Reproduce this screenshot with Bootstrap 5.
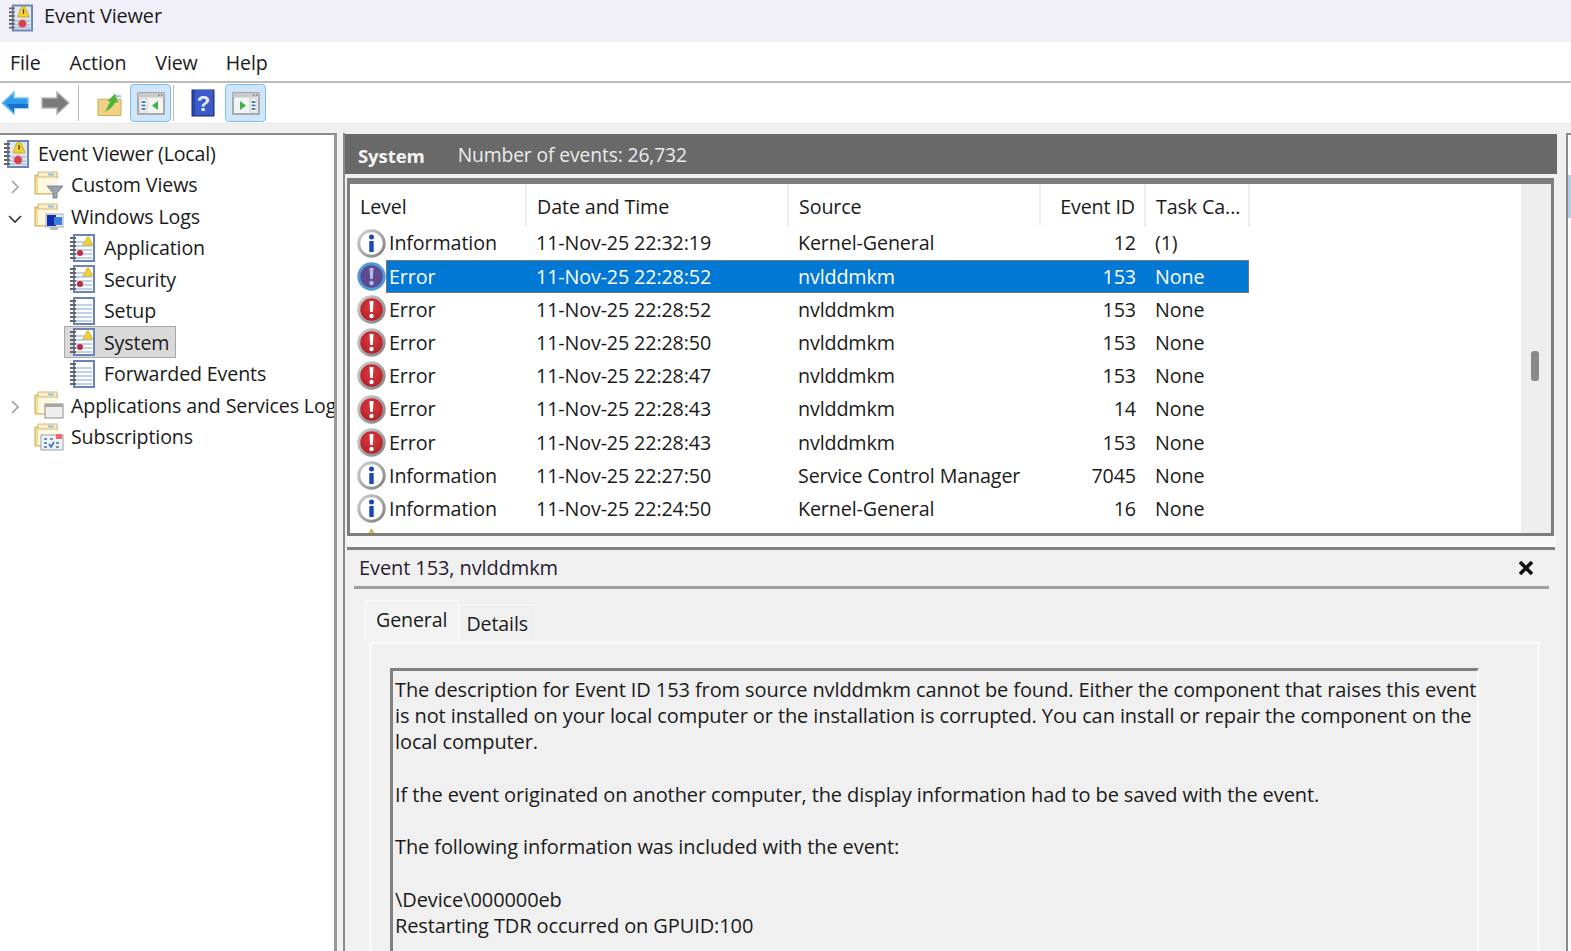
<!DOCTYPE html>
<html lang="en"><head><meta charset="utf-8"><title>Event Viewer</title>
<link href="https://cdn.jsdelivr.net/npm/bootstrap@5.3.0/dist/css/bootstrap.min.css" rel="stylesheet">
<style>
:root{--ff:"Open Sans","Noto Sans",sans-serif}
html,body{height:951px;overflow:hidden}
body{font-family:var(--ff);font-size:19.6px;color:#1a1a1a;background:#f0f0f0;letter-spacing:-.12px}
.ev-title{height:42px;background:#f1f0f8;padding:0 0 10px 8px;gap:11px}
.ev-title svg{width:25px;height:28px;flex:none;margin-top:3px}
.ev-title span{font-size:19.9px}
.ev-menu{height:41px;background:#fff;border-bottom:2px solid #bdbdbd;padding-top:3px}
.m1{margin-left:10px}.m2{margin-left:29px}.m3{margin-left:29px}.m4{margin-left:28px}
.ev-tools{height:41px;background:#fff;border-bottom:1px solid #e8e8e8;position:relative}
.tb-sep{width:1px;height:36px;background:#bbb}
.tb-on{width:41px;height:38px;background:#cfe6fa;border:1px solid #7fbcec;border-radius:4px}
.ev-main{height:calc(951px - 124px);padding-top:9px;background:#f0f0f0}
.ev-tree{width:337px;flex:none;background:#fff;border-top:2px solid #8a8a8a;border-right:3px solid #999;overflow:hidden;padding-top:3px;white-space:nowrap}
.ev-tree svg{flex:none}
.t-row{height:31.45px}
.t-chev{width:30px;flex:none;text-align:center}
.t-l0{padding-left:3px}.t-l0 svg{width:26px;height:28px;margin-right:9px}
.t-l0 span{letter-spacing:-.2px}
.t-l1 svg.fi{width:30px;height:28px;margin-right:7px;margin-left:4px}
.t-l2{padding-left:69px}.t-l2 svg{width:26px;height:28px;margin-right:9px}
.t-clip{overflow:hidden;width:263px;flex:none}
.t-sel{background:#d9d9d9;border:1px solid #a8a8a8;margin-left:-5px;padding:0 6px 0 4px;height:32px;width:112px}
.ev-center{width:1214px;margin-left:6px;flex:none;border-left:2px solid #8a8a8a}
.ev-head{height:40px;background:#696969;color:#ececec;margin-top:1px;padding:3px 0 0 13px;gap:33px;font-size:19.3px}
.ev-head b{font-weight:700;color:#f5f5f5;font-size:18.6px}
.ev-list{height:358px;margin:4px 3px 0 2px;background:#fff;border:3px solid #7d7d7d;border-top-width:6px;overflow:hidden;position:relative}
.ev-scroll{position:absolute;right:0;top:0;bottom:0;width:30px;background:#eee}
.ev-thumb{position:absolute;left:10px;top:167px;width:8px;height:30px;background:#8a8a8a;border-radius:3px}
.ev-tbl{table-layout:fixed;width:899px;margin:0;border-collapse:collapse;font-size:19.7px}
.ev-tbl td,.ev-tbl th{padding:0 9px 0 10px;font-weight:400;height:33.2px;white-space:nowrap;overflow:hidden;border:0;background:transparent;color:#1a1a1a;vertical-align:middle}
.ev-tbl thead th{height:42.6px;border-right:2px solid #eee;padding-top:2px}
.ev-tbl td.c-ico{padding:0 0 0 7px;line-height:0}
.ev-tbl td.c-lvl{padding-left:3px}
.ev-tbl svg{width:29px;height:29px}
.ev-tbl .num{text-align:right}
.ev-tbl tr.on td:not(.c-ico){background:#0078d4;color:#fff;box-shadow:inset 0 1px #777,inset 0 -1px #777}
.ev-tbl tr.on td.c-lvl{box-shadow:inset 0 1px #777,inset 0 -1px #777,inset 1px 0 #777}
.ev-tbl tr.on td:last-child{box-shadow:inset 0 1px #777,inset 0 -1px #777,inset -1px 0 #777}
.ev-gap{height:11px;background:#f7f7f7;margin:0 1px 0 2px}
.ev-detail{background:#f0f0f0;margin-left:2px;margin-right:2px;border-top:3px solid #808080;height:405px;padding:0 6px 0 7px;font-size:20px;letter-spacing:-.1px}
.d-title{height:39px;border-bottom:3px solid #a0a0a0;padding:0 0 0 5px;color:#2a1a30}
.d-close{width:18px;height:18px;margin-right:14px}
.d-tabs{margin:11px 0 0 10px;border:0;align-items:flex-end}
.d-tabs .nav-link{border:1px solid #f7f7f7;border-bottom:0;border-radius:0;color:#1a1a1a;background:#f0f0f0;padding:0 6px;height:37px;line-height:37px;margin:0;font-size:19.6px}
.d-tabs .nav-link.active{height:41px;background:#f3f3f3;padding:0 11px;border-color:#f9f9f9;line-height:38px;color:#1a1a1a}
.d-body{margin:0 9px 0 15px;border:3px solid #f8f8f8;border-bottom:0;height:320px;padding:24px 55px 0 18px}
.d-text{border-left:3px solid #808080;border-top:3px solid #808080;border-right:2px solid #fafafa;padding:6px 0 0 2px;line-height:26.2px;height:300px;white-space:nowrap;overflow:hidden;width:1089px}
.ev-right{flex:1;margin-left:9px;border-left:2px solid #8a8a8a;border-top:2px solid #8a8a8a;background:#fff}
.ev-right div{height:43px;margin-top:40px;background:#b5cde8}
.hq{font:700 22px "Liberation Sans",sans-serif;fill:#e8ecf8}
</style></head><body>
<svg width="0" height="0" class="position-absolute">
<defs>
<radialGradient id="g-red" cx=".5" cy=".4" r=".65"><stop offset="0" stop-color="#e03a3f"/><stop offset="1" stop-color="#a81c26"/></radialGradient>
<linearGradient id="g-ring" x1="0" y1="0" x2="1" y2="1"><stop offset="0" stop-color="#d0d0d0"/><stop offset="1" stop-color="#808080"/></linearGradient>
<symbol id="i-log" viewBox="0 0 26 28"><rect x="5" y="1" width="20" height="26" fill="#fff" stroke="#6a83b8" stroke-width="2"/><path d="M7 8h16M7 12h16M7 16h16M7 20h16M7 24h16" stroke="#a9c3e2" stroke-width="1.6"/><path d="M1 4h6M1 8h6M1 12h6M1 16h6M1 20h6M1 24h6" stroke="#666" stroke-width="2"/></symbol>
<symbol id="i-logw" viewBox="0 0 26 28"><use href="#i-log"/><path d="M13 11l3-3 2-5h2l2 5 2 3z" fill="#f3d22f" stroke="#c9a814" stroke-width=".6"/><circle cx="11" cy="19" r="3" fill="#c8273a"/></symbol>
<symbol id="i-logb" viewBox="0 0 26 28"><rect x="5" y="1" width="20" height="26" fill="#dfe7f3" stroke="#6a83b8" stroke-width="2"/><path d="M7 17h16M7 21h16M7 24h16" stroke="#a9c3e2" stroke-width="1.6"/><path d="M1 4h6M1 8h6M1 12h6M1 16h6M1 20h6M1 24h6" stroke="#666" stroke-width="2"/><path d="M16 2c-3 0-4 6-5 8l-1 3h12l-1-3c-1-2-2-8-5-8z" fill="#f3d22f" stroke="#b89a14" stroke-width=".7"/><path d="M15.500 5h1.300v4.500h-1.300z" fill="#333"/><circle cx="15" cy="20" r="4.500" fill="#d2434f" stroke="#f3b9bd"/></symbol>
<symbol id="i-fold" viewBox="0 0 30 28"><path d="M1 4h6l1-2h15v6h-1v15H1z" fill="#f5dc93" stroke="#c9ab5f"/><rect x="4" y="5" width="19" height="17" fill="#fff8e0"/><rect x="4" y="1" width="19" height="5" fill="#f9eec7" stroke="#c9ab5f" stroke-width=".8"/><rect x="14" y="2.500" width="6" height="2" fill="#8fbfe6"/></symbol>
<symbol id="i-ffil" viewBox="0 0 30 28"><use href="#i-fold"/><path d="M13 15h16l-6 7v5h-4v-5z" fill="#9aa3ad" stroke="#6f7a85" stroke-width=".8"/></symbol>
<symbol id="i-fwin" viewBox="0 0 30 28"><use href="#i-fold"/><rect x="12" y="11" width="17" height="13" fill="#e9eef5" stroke="#a4adb9"/><path d="M13 12h9v11h-9z" fill="#0f2fb0"/><path d="M20 14h8v8h-8z" fill="#3c7fe0"/><path d="M16 24h8v3h-8z" fill="#bbb"/></symbol>
<symbol id="i-fapp" viewBox="0 0 30 28"><use href="#i-fold"/><rect x="11" y="13" width="18" height="14" fill="#eee" stroke="#8d8d8d"/><rect x="11" y="13" width="18" height="3" fill="#a5a5a5"/></symbol>
<symbol id="i-fsub" viewBox="0 0 30 28"><use href="#i-fold"/><rect x="7" y="12" width="22" height="15" fill="#eef1f5" stroke="#9aa3ad"/><rect x="22" y="11" width="6" height="5" fill="#f0686e"/><path d="M10 16h3M16 16h3M10 20h3M22 20h3M22 24h3M10 24h3" stroke="#4a6fb0" stroke-width="1.500"/><path d="M15 21l2 3 3-5" stroke="#2f6fd0" stroke-width="1.500" fill="none"/></symbol>
<symbol id="i-info" viewBox="0 0 29 29"><circle cx="14.500" cy="14.500" r="12.700" fill="#fff" stroke="url(#g-ring)" stroke-width="3"/><rect x="12.300" y="12" width="4.400" height="11" fill="#1a46b8"/><circle cx="14.500" cy="8" r="2.500" fill="#1a46b8"/></symbol>
<symbol id="i-err" viewBox="0 0 29 29"><circle cx="14.500" cy="14.500" r="12.700" fill="url(#g-red)" stroke="url(#g-ring)" stroke-width="3"/><path d="M12.500 6h4l-.7 11h-2.600z" fill="#fff"/><circle cx="14.500" cy="21" r="2.200" fill="#fff"/></symbol>
<symbol id="i-errs" viewBox="0 0 29 29"><circle cx="14.500" cy="14.500" r="12.700" fill="#5f4a92" stroke="#4f9bd8" stroke-width="3"/><path d="M12.500 6h4l-.7 11h-2.600z" fill="#aebfe0"/><circle cx="14.500" cy="21" r="2.200" fill="#aebfe0"/></symbol>
<symbol id="i-warn" viewBox="0 0 29 29"><path d="M14.500 2L27 26H2z" fill="#f3d22f" stroke="#b89a14"/></symbol>
<symbol id="i-pane" viewBox="0 0 28 24"><rect x="1" y="2" width="26" height="21" fill="#f4f4f4" stroke="#8d8d8d" stroke-width="1.400"/><rect x="1" y="2" width="26" height="4.500" fill="#c9c9c9"/><path d="M21 4h1.500M24 4h1.500" stroke="#555"/><rect x="3" y="8" width="7" height="13" fill="#fff" stroke="#b9b9b9" stroke-width=".7"/><path d="M4.500 11h4M4.500 14.500h4M4.500 18h4" stroke="#4f7fc0" stroke-width="2"/></symbol>
<symbol id="i-panr" viewBox="0 0 28 24"><rect x="1" y="2" width="26" height="21" fill="#f4f4f4" stroke="#8d8d8d" stroke-width="1.400"/><rect x="1" y="2" width="26" height="4.500" fill="#c9c9c9"/><path d="M21 4h1.500M24 4h1.500" stroke="#555"/><rect x="18" y="8" width="7" height="13" fill="#fff" stroke="#b9b9b9" stroke-width=".7"/><path d="M19.500 11h4M19.500 14.500h4M19.500 18h4" stroke="#4f7fc0" stroke-width="2"/></symbol>
</defs></svg>

<div class="ev-title d-flex align-items-center"><svg><use href="#i-logb"/></svg><span>Event Viewer</span></div>
<div class="ev-menu d-flex align-items-center"><span class="m1">File</span><span class="m2">Action</span><span class="m3">View</span><span class="m4">Help</span></div>
<div class="ev-tools d-flex align-items-center">
 <svg class="tb-a" style="margin-left:1px" width="28" height="24" viewBox="0 0 28 24"><path d="M1 12L13 1v6h14v10H13v6z" fill="#2f9be8" stroke="#7cc3f2" stroke-width="1.500"/><path d="M6 13h21v4H13v5z" fill="#1772c9"/></svg>
 <svg style="margin-left:12px" width="29" height="24" viewBox="0 0 29 24"><path d="M28 12L16 1v6H1v10h15v6z" fill="#7a7a7a" stroke="#b5b5b5" stroke-width="1.500"/></svg>
 <div class="tb-sep ms-2"></div>
 <svg style="margin-left:18px" width="25" height="27" viewBox="0 0 26 27"><path d="M1 9h24v17H1z" fill="#f0d184" stroke="#c9ab5f"/><path d="M8 22c3-3 3-7 6-10l-3-1 8-8 3 10-3-1c-2 4-5 8-11 10z" fill="#4cb43a"/><rect x="19" y="5" width="6" height="2" fill="#8fbfe6"/></svg>
 <div class="tb-on d-flex align-items-center justify-content-center" style="margin-left:8px"><svg width="28" height="24"><use href="#i-pane"/><path d="M21 10v9l-6-4.500z" fill="#38b44a"/></svg></div>
 <div class="tb-sep" style="margin-left:2px"></div>
 <svg style="margin-left:17px;flex:none" width="24" height="29" viewBox="0 0 24 29"><rect x="1" y="1" width="22" height="26" fill="#2b46a8" stroke="#1d2f7a"/><path d="M4 1h18v25H4z" fill="#3a5bc8"/><text class="hq" x="12.500" y="22" text-anchor="middle">?</text></svg>
 <div class="tb-on d-flex align-items-center justify-content-center" style="margin-left:10px"><svg width="28" height="24"><use href="#i-panr"/><path d="M8 10v9l6-4.500z" fill="#38b44a"/></svg></div>
</div>

<div class="ev-main d-flex">
 <div class="ev-tree">
  <div class="t-row t-l0 d-flex align-items-center"><svg><use href="#i-logb"/></svg><span>Event Viewer (Local)</span></div>
  <div class="t-row t-l1 d-flex align-items-center"><span class="t-chev"><svg width="10" height="16" viewBox="0 0 10 16"><path d="M2 2l6 6-6 6" fill="none" stroke="#a0a0a0" stroke-width="1.600"/></svg></span><svg class="fi"><use href="#i-ffil"/></svg>Custom Views</div>
  <div class="t-row t-l1 d-flex align-items-center"><span class="t-chev"><svg width="16" height="10" viewBox="0 0 16 10"><path d="M2 2l6 6 6-6" fill="none" stroke="#333" stroke-width="1.600"/></svg></span><svg class="fi"><use href="#i-fwin"/></svg>Windows Logs</div>
  <div class="t-row t-l2 d-flex align-items-center"><svg><use href="#i-logw"/></svg>Application</div>
  <div class="t-row t-l2 d-flex align-items-center"><svg><use href="#i-logw"/></svg>Security</div>
  <div class="t-row t-l2 d-flex align-items-center"><svg><use href="#i-log"/></svg>Setup</div>
  <div class="t-row t-l2 d-flex align-items-center"><div class="t-sel d-flex align-items-center"><svg><use href="#i-logw"/></svg>System</div></div>
  <div class="t-row t-l2 d-flex align-items-center"><svg><use href="#i-log"/></svg>Forwarded Events</div>
  <div class="t-row t-l1 d-flex align-items-center"><span class="t-chev"><svg width="10" height="16" viewBox="0 0 10 16"><path d="M2 2l6 6-6 6" fill="none" stroke="#a0a0a0" stroke-width="1.600"/></svg></span><svg class="fi"><use href="#i-fapp"/></svg><span class="t-clip">Applications and Services Logs</span></div>
  <div class="t-row t-l1 d-flex align-items-center"><span class="t-chev"></span><svg class="fi"><use href="#i-fsub"/></svg>Subscriptions</div>
 </div>
 <div class="ev-center">
  <div class="ev-head d-flex align-items-center"><b>System</b><span>Number of events: 26,732</span></div>
  <div class="ev-list">
   <table class="table ev-tbl"><colgroup><col style="width:36px"><col style="width:140px"><col style="width:262px"><col style="width:252px"><col style="width:105px"><col style="width:104px"></colgroup>
   <thead><tr><th colspan="2">Level</th><th>Date and Time</th><th>Source</th><th class="num">Event ID</th><th>Task Ca...</th></tr></thead>
   <tbody>
   <tr><td class="c-ico"><svg><use href="#i-info"/></svg></td><td class="c-lvl">Information</td><td>11-Nov-25 22:32:19</td><td>Kernel-General</td><td class="num">12</td><td>(1)</td></tr>
   <tr class="on"><td class="c-ico"><svg><use href="#i-errs"/></svg></td><td class="c-lvl">Error</td><td>11-Nov-25 22:28:52</td><td>nvlddmkm</td><td class="num">153</td><td>None</td></tr>
   <tr><td class="c-ico"><svg><use href="#i-err"/></svg></td><td class="c-lvl">Error</td><td>11-Nov-25 22:28:52</td><td>nvlddmkm</td><td class="num">153</td><td>None</td></tr>
   <tr><td class="c-ico"><svg><use href="#i-err"/></svg></td><td class="c-lvl">Error</td><td>11-Nov-25 22:28:50</td><td>nvlddmkm</td><td class="num">153</td><td>None</td></tr>
   <tr><td class="c-ico"><svg><use href="#i-err"/></svg></td><td class="c-lvl">Error</td><td>11-Nov-25 22:28:47</td><td>nvlddmkm</td><td class="num">153</td><td>None</td></tr>
   <tr><td class="c-ico"><svg><use href="#i-err"/></svg></td><td class="c-lvl">Error</td><td>11-Nov-25 22:28:43</td><td>nvlddmkm</td><td class="num">14</td><td>None</td></tr>
   <tr><td class="c-ico"><svg><use href="#i-err"/></svg></td><td class="c-lvl">Error</td><td>11-Nov-25 22:28:43</td><td>nvlddmkm</td><td class="num">153</td><td>None</td></tr>
   <tr><td class="c-ico"><svg><use href="#i-info"/></svg></td><td class="c-lvl">Information</td><td>11-Nov-25 22:27:50</td><td>Service Control Manager</td><td class="num">7045</td><td>None</td></tr>
   <tr><td class="c-ico"><svg><use href="#i-info"/></svg></td><td class="c-lvl">Information</td><td>11-Nov-25 22:24:50</td><td>Kernel-General</td><td class="num">16</td><td>None</td></tr>
   <tr><td class="c-ico"><svg><use href="#i-warn"/></svg></td><td></td><td></td><td></td><td></td><td></td></tr>
   </tbody></table>
   <div class="ev-scroll"><div class="ev-thumb"></div></div>
  </div>
  <div class="ev-gap"></div>
  <div class="ev-detail">
   <div class="d-title d-flex align-items-center justify-content-between"><span>Event 153, nvlddmkm</span><svg class="d-close" viewBox="0 0 18 18"><path d="M3 3l12 12M15 3L3 15" stroke="#111" stroke-width="3.600"/></svg></div>
   <ul class="nav nav-tabs d-tabs"><li class="nav-item"><a class="nav-link active" href="#">General</a></li><li class="nav-item"><a class="nav-link" href="#">Details</a></li></ul>
   <div class="d-body"><div class="d-text">The description for Event ID 153 from source nvlddmkm cannot be found. Either the component that raises this event<br>is not installed on your local computer or the installation is corrupted. You can install or repair the component on the<br>local computer.<br><br>If the event originated on another computer, the display information had to be saved with the event.<br><br>The following information was included with the event:<br><br>\Device\000000eb<br>Restarting TDR occurred on GPUID:100</div></div>
  </div>
 </div>
 <div class="ev-right"><div></div></div>
</div>
</body></html>
